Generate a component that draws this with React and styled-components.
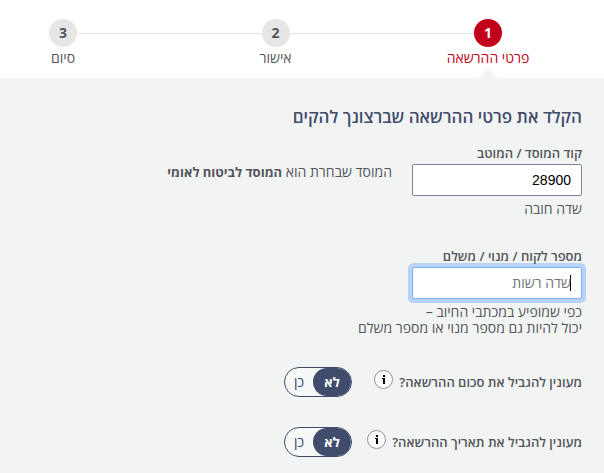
import { Fragment, useState } from "react";
import styled, { createGlobalStyle, css } from "styled-components";

const GlobalStyle = createGlobalStyle`
  * {
    box-sizing: border-box;
  }

  body {
    margin: 0;
    background-color: #f2f4f4;
    color: #54565b;
    font-family: "Open Sans", "Liberation Sans", sans-serif;
    font-size: 14px;
    line-height: 16px;
  }
`;

// Steps bar

const StepsBar = styled.ol`
  display: flex;
  align-items: flex-start;
  margin: 0;
  padding: 19px 102px 0 49px;
  height: 78px;
  list-style: none;
  background-color: #fff;
`;

const Step = styled.li`
  display: flex;
  flex-direction: column;
  align-items: center;
  width: 28px;
  white-space: nowrap;
  font-size: 14px;
  line-height: 22px;
  color: ${(props) => (props.$active ? "#c3001a" : "#54565b")};
`;

const StepNumber = styled.span`
  width: 28px;
  height: 28px;
  border-radius: 50%;
  text-align: center;
  font-weight: 700;
  line-height: 28px;
  color: ${(props) => (props.$active ? "#fff" : "#54565b")};
  background-color: ${(props) => (props.$active ? "#c3001a" : "#e6e6e6")};
`;

const StepArrow = styled.span`
  border: 9px solid transparent;
  border-top-width: 0;
  border-bottom-color: #f2f4f4;
`;

const StepLine = styled.li`
  flex: 1;
  height: 1px;
  margin-top: 14px;
  background-color: #e2e2e2;
`;

// Form

const Form = styled.form`
  padding: 28px 22px 16px;
`;

const Title = styled.h1`
  margin: 0 0 17px;
  font-size: 17px;
  font-weight: 600;
  line-height: 22px;
  color: #414b6b;
`;

const Field = styled.div`
  margin-bottom: 31px;
`;

const FieldLabel = styled.label`
  display: block;
  margin-bottom: 3px;
  font-size: 13px;
  font-weight: 600;
`;

const FieldRow = styled.div`
  display: flex;
  gap: 20px;
`;

const TextInput = styled.input`
  display: block;
  width: 170px;
  height: 32px;
  padding: 0 10px;
  border: 1px solid #7b84a0;
  border-radius: 2px;
  outline: none;
  background-color: #fff;
  color: #000;
  font-family: "Liberation Sans", sans-serif;
  font-size: 14px;

  &::placeholder {
    color: #6c757d;
    font-family: "Open Sans", sans-serif;
    font-size: 14px;
    opacity: 1;
  }

  &:focus {
    border-color: #80b0fb;
    box-shadow: 0 0 0 4px #b9d3f7;
  }

  /* steady caret while the field is still empty */
  &:focus:placeholder-shown {
    caret-color: transparent;
    background-image: linear-gradient(#000, #000);
    background-repeat: no-repeat;
    background-size: 1px 16px;
    background-position: right 10px center;
  }
`;

const Message = styled.p`
  margin: 0;

  b {
    font-size: 13px;
  }
`;

const Hint = styled.p`
  margin: 5px 0 0;
`;

const SwitchRow = styled.fieldset`
  display: flex;
  align-items: center;
  height: 30px;
  margin: 0 0 30px;
  padding: 0;
  border: 0;

  &:last-child {
    margin-bottom: 0;
  }
`;

const QuestionBox = styled.div`
  display: flex;
  align-items: center;
  gap: 6px;
  flex: 0 0 230px;
`;

const Question = styled.span`
  font-size: 13px;
  font-weight: 600;
`;

const InfoButton = styled.button`
  display: flex;
  align-items: center;
  justify-content: center;
  width: 19px;
  height: 19px;
  margin: 0 0 6px;
  padding: 0;
  border: 1px solid #8c8fa8;
  border-radius: 50%;
  background-color: #fff;
  color: #000;
  cursor: pointer;
`;

const Switch = styled.span`
  display: flex;
  width: 68px;
  height: 30px;
  border: 1px solid #414b6b;
  border-radius: 15px;
  overflow: hidden;
  background-color: #f7f8f8;
`;

const Option = styled.label`
  display: flex;
  align-items: center;
  justify-content: center;
  flex: 1;
  border-radius: 15px;
  font-size: 14px;
  color: #414b6b;
  cursor: pointer;

  ${(props) =>
    props.$checked &&
    css`
      flex: 0 0 38px;
      font-size: 13px;
      font-weight: 700;
      color: #fff;
      background-color: #414b6b;
    `}
`;

const HiddenRadio = styled.input`
  appearance: none;
  width: 0;
  height: 0;
  margin: 0;
`;

const steps = ["פרטי ההרשאה", "אישור", "סיום"];

const Steps = ({ current }) => (
  <StepsBar>
    {steps.map((name, i) => (
      <Fragment key={name}>
        {i > 0 && <StepLine aria-hidden="true" />}
        <Step $active={i === current}>
          <StepNumber $active={i === current}>{i + 1}</StepNumber>
          <span>{name}</span>
          {i === current && <StepArrow />}
        </Step>
      </Fragment>
    ))}
  </StepsBar>
);

const LimitSwitch = ({ name, question }) => {
  const [value, setValue] = useState("no");

  const option = (key, text) => (
    <Option $checked={value === key}>
      <HiddenRadio
        type="radio"
        name={name}
        checked={value === key}
        onChange={() => setValue(key)}
      />
      {text}
    </Option>
  );

  return (
    <SwitchRow aria-labelledby={`${name}-question`}>
      <QuestionBox>
        <Question id={`${name}-question`}>{question}</Question>
        <InfoButton type="button" aria-label="מידע נוסף">
          <svg width="3" height="9" viewBox="0 0 3 9" fill="currentColor">
            <path d="M1 0h2v2H1zM0 3h3v6H1V4H0z" />
          </svg>
        </InfoButton>
      </QuestionBox>
      <Switch>
        {option("no", "לא")}
        {option("yes", "כן")}
      </Switch>
    </SwitchRow>
  );
};

export default function App() {
  const [code, setCode] = useState("28900");
  const [client, setClient] = useState("");

  return (
    <div dir="rtl" lang="he">
      <GlobalStyle />
      <Steps current={0} />

      <Form>
        <Title>הקלד את פרטי ההרשאה שברצונך להקים</Title>

        <Field>
          <FieldLabel htmlFor="code">קוד המוסד / המוטב</FieldLabel>
          <FieldRow>
            <TextInput
              id="code"
              value={code}
              onChange={(e) => setCode(e.target.value)}
            />
            <Message>
              המוסד שבחרת הוא <b>המוסד לביטוח לאומי</b>
            </Message>
          </FieldRow>
          <Hint>שדה חובה</Hint>
        </Field>

        <Field>
          <FieldLabel htmlFor="client">מספר לקוח / מנוי / משלם</FieldLabel>
          <TextInput
            id="client"
            placeholder="שדה רשות"
            value={client}
            onChange={(e) => setClient(e.target.value)}
            autoFocus
          />
          <Hint>
            כפי שמופיע במכתבי החיוב –
            <br />
            יכול להיות גם מספר מנוי או מספר משלם
          </Hint>
        </Field>

        <LimitSwitch name="amount" question="מעונין להגביל את סכום ההרשאה?" />
        <LimitSwitch name="date" question="מעונין להגביל את תאריך ההרשאה?" />
      </Form>
    </div>
  );
}
